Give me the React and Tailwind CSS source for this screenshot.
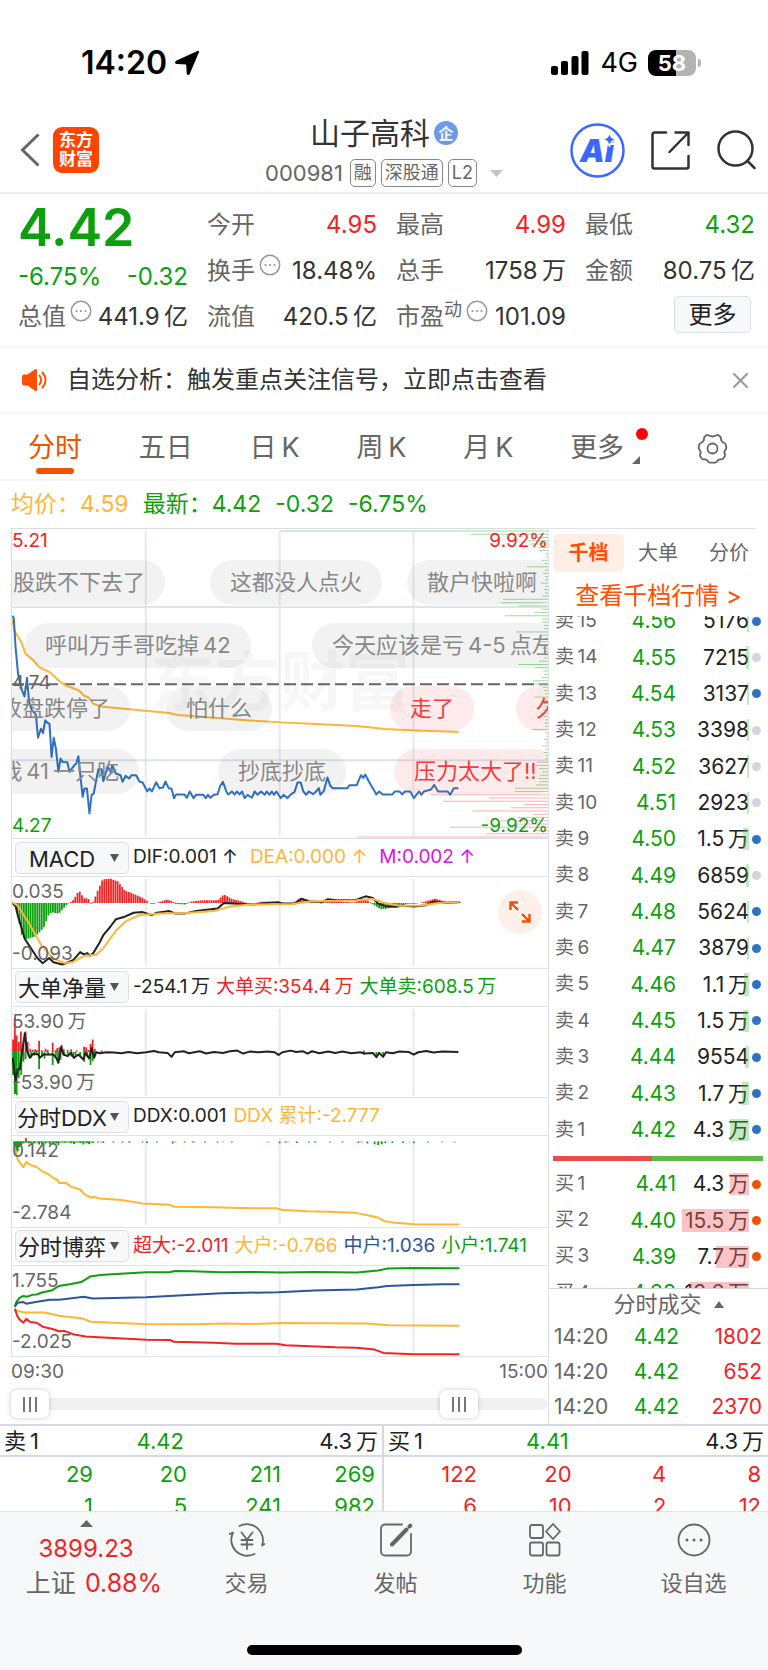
const PRICE_LINE =
  "35,-15 39,-8 44,80 51,160 57,190 62,210 69,228 76,172 82,245 90,270 101,282 104,320 107,352 115,325 121,338 127,300 134,308 139,310 145,410 151,352 157,385 164,455 170,415 176,425 189,426 195,455 208,436 214,430 220,408 226,470 232,530 237,505 244,505 251,580 257,525 263,520 270,480 276,447 285,447 290,483 296,460 303,440 310,455 315,435 325,460 338,465 344,485 352,467 362,475 369,465 382,465 391,484 400,487 413,514 419,505 426,514 438,486 447,504 457,502 464,484 473,504 481,506 488,534 494,523 517,523 524,533 532,514 543,534 550,524 570,524 577,534 583,524 590,533 600,524 610,522 618,496 625,485 635,515 640,523 650,514 658,523 664,514 672,523 679,514 686,534 694,524 706,533 714,514 722,524 732,514 742,524 748,514 756,524 762,514 768,524 775,514 787,534 795,524 806,534 814,524 826,515 834,487 843,487 850,513 858,524 866,514 878,522 886,514 894,504 898,524 908,512 918,472 926,497 933,504 974,504 980,495 1000,495 1012,465 1018,473 1024,463 1034,484 1050,513 1055,523 1063,514 1073,523 1100,523 1107,514 1120,514 1127,523 1135,514 1150,514 1160,534 1168,523 1175,514 1181,524 1188,514 1208,508 1217,494 1228,514 1255,514 1262,524 1272,504 1285,504";
const AVG_LINE =
  "35,-5 41,30 60,65 72,100 95,120 110,140 140,155 170,185 185,195 222,210 235,225 250,232 262,250 285,258 340,264 400,270 470,277 500,284 600,292 700,300 790,306 900,312 1000,317 1080,326 1150,330 1285,335";
const DIF_LINE =
  "35,190 44,200 52,235 70,300 85,325 105,358 120,374 138,358 150,371 175,378 205,365 225,340 235,347 245,343 252,351 262,343 280,310 290,288 310,262 325,240 350,232 375,220 400,218 425,227 440,220 475,215 490,222 520,222 550,215 610,207 628,190 680,193 710,195 745,190 780,188 790,192 825,192 845,177 870,186 905,187 918,179 945,182 1000,180 1025,170 1045,175 1060,192 1080,200 1110,202 1130,198 1160,201 1190,198 1215,186 1250,190 1285,188";
const DEA_LINE =
  "35,188 50,198 80,250 120,325 150,360 180,373 205,370 235,352 270,348 290,328 325,275 350,248 390,227 450,222 520,221 600,215 640,202 700,195 820,193 870,186 1000,182 1045,178 1080,190 1120,199 1180,198 1230,190 1285,188";
const NET_LINE =
  "36,655 44,725 50,690 56,690 62,640 70,580 76,632 84,655 92,643 106,643 112,655 122,645 150,645 158,655 164,670 172,622 178,645 190,650 198,640 208,655 220,645 234,660 240,640 250,657 257,625 264,655 270,638 280,641 300,638 320,639 340,641 360,637 385,641 410,638 432,634 445,638 470,640 481,652 490,638 515,635 530,641 560,635 578,642 600,637 625,640 645,635 665,633 682,642 700,636 725,638 750,636 770,638 781,646 792,638 815,633 830,637 850,635 862,642 875,635 895,641 920,636 940,640 960,636 985,641 1010,638 1022,642 1045,640 1055,653 1063,640 1074,652 1082,638 1100,641 1120,636 1145,637 1160,645 1172,638 1195,634 1215,639 1240,636 1285,637";
const DDX_LINE =
  "40,165 45,185 50,210 66,232 74,217 85,226 103,232 120,246 135,253 150,265 158,268 166,280 185,280 200,292 225,300 237,315 257,325 262,322 280,327 340,332 400,342 475,346 488,352 600,354 670,356 775,357 790,361 860,366 920,367 995,370 1030,378 1060,385 1078,396 1110,401 1160,405 1288,406";
const GAME_LINES = [
  ["#0d9f0d", "42,650 46,635 55,622 66,616 75,619 90,613 103,612 120,605 145,600 165,586 200,580 228,574 255,556 290,552 410,544 475,544 490,540 540,541 620,544 700,543 790,545 880,543 1000,545 1060,539 1085,533 1160,531 1288,532"],
  ["#2e5597", "42,648 50,637 66,635 74,640 100,635 140,628 165,628 190,625 235,619 260,624 410,620 500,615 620,608 780,605 880,600 1000,597 1060,590 1085,586 1160,583 1240,581 1288,581"],
  ["#ffb637", "42,660 70,667 125,667 165,677 228,684 255,695 400,702 550,703 630,700 700,702 790,699 1030,700 1090,706 1288,707"],
  ["#f02424", "42,655 48,675 54,687 66,698 74,686 85,696 103,698 120,710 150,718 165,724 180,723 205,733 240,740 290,743 410,750 478,751 488,756 600,759 660,762 775,762 800,767 940,773 1000,774 1050,780 1075,790 1160,794 1288,794"],
];

// [x, height] turning points of the MACD histogram
const MACD_SHAPE = [
  [40, 0], [50, -35], [60, -95], [70, -112], [100, -102], [115, -85], [125, -72], [135, -40], [145, -28], [165, -33],
  [180, -15], [190, -3], [197, 1], [205, 8], [222, 38], [235, 14], [248, 14], [254, -4], [262, 4], [275, 40],
  [288, 72], [310, 74], [330, 66], [350, 38], [380, 25], [400, 15], [412, 6], [418, 0], [428, -4], [440, 0],
  [466, 10], [485, 5], [492, -3], [520, -5], [535, 4], [570, 8], [610, 8], [628, 26], [650, 12], [680, 4],
  [700, -3], [740, 4], [780, 2], [820, -2], [845, 16], [870, 5], [900, -2], [920, 8], [990, 1], [1025, 12],
  [1042, -3], [1070, -20], [1110, -12], [1140, -3], [1170, -2], [1190, 4], [1220, 13], [1250, 4], [1292, 4],
];
const NET_BUY = [
  [37, 38], [42, 105], [47, 50], [53, 30], [59, 62], [65, 20], [72, 62], [78, 30], [85, 10], [92, 7], [99, 8], [104, 5],
  [110, 34], [118, 5], [128, 10], [134, 6], [148, 28], [156, 5], [161, 12], [167, 14], [173, 22], [179, 8], [190, 5],
  [200, 8], [215, 4], [236, 16], [242, 14], [248, 6], [254, 24], [260, 38], [266, 10], [285, 4], [1020, 4],
];
const NET_SELL = [
  [37, 70], [42, 128], [47, 132], [53, 80], [60, 70], [66, 30], [72, 22], [80, 14], [88, 18], [96, 12], [102, 10], [110, 52],
  [118, 10], [125, 20], [135, 10], [148, 40], [157, 14], [163, 30], [170, 24], [180, 10], [190, 8], [200, 14], [206, 12],
  [212, 12], [225, 12], [236, 30], [245, 14], [254, 40], [260, 28], [266, 12], [1020, 9], [1055, 14], [1074, 12],
];
const DDX_BARS = [
  [40, 18], [45, 32], [50, 30], [55, 16], [60, 10], [66, 6], [80, 5], [86, 4], [96, 6], [110, 9], [118, 7], [128, 6], [140, 8],
  [150, 7], [158, 6], [164, 11], [182, 3], [200, 5], [208, 7], [226, 4], [234, 9], [244, 5], [250, 8], [262, 4], [275, 3],
  [290, 4], [318, 3], [344, 3], [362, 3], [400, 3], [412, 4], [440, 3], [484, 6], [518, 3], [540, 3], [575, 3], [610, 3],
  [650, 3], [784, 5], [800, 3], [832, 4], [866, 3], [882, 3], [925, 3], [960, 3], [1005, 4], [1030, 6], [1050, 8],
  [1060, 10], [1070, 8], [1080, 5], [1100, 4], [1130, 4], [1160, 5], [1200, 3], [1240, 2],
];

// resting volume per price level, top to bottom, in px
const DEPTH = [
  268, 77, 12, 20, 18, 10, 9, 3, 2, 7, 3, 21, 3, 5, 3, 3, 7, 3, 4, 3, 6, 45, 47, 30, 7, 14, 43, 6, 6, 4, 4, 32,
  6, 3, 8, 12, 6, 4, 3, 4, 9, 30, 13, 5, 4, 6, 15, 13, 5, 4, 3, 14, 6, 4, 3, 5, 8, 4, 3, 4, 3, 16, 3, 2,
  4, 2, 6, 3, 4, 2, 3, 11, 12, 9, 6, 8, 10, 9, 12, 33, 33, 118, 59, 105, 24, 37, 76, 14, 30, 48, 30, 98, 16, 62, 191,
];

const BULLETS = [
  ["股跌不下去了", "right-[383px] top-[31px] bg-black/5 text-[#888]"],
  ["这都没人点火", "left-[198px] top-[31px] bg-black/5 text-[#888]"],
  ["散户快啦啊", "left-[395px] top-[31px] bg-black/5 text-[#888]"],
  ["呼叫万手哥吃掉\u200942", "left-[13px] top-[94px] bg-black/5 text-[#888]"],
  ["今天应该是亏\u20094-5\u2009点左右", "left-[300px] top-[94px] bg-black/5 text-[#888]"],
  ["收盘跌停了", "right-[418px] top-[157px] bg-black/5 text-[#888]"],
  ["怕什么", "left-[154px] top-[157px] bg-black/5 text-[#888]"],
  ["走了", "left-[378px] top-[157px] bg-[#f03c3c]/10 text-[#f03c3c]"],
  ["久了", "left-[504px] top-[157px] bg-[#f03c3c]/10 text-[#f03c3c]"],
  ["我\u200941\u2009一只吃", "right-[409px] top-[220px] bg-black/5 text-[#888]"],
  ["抄底抄底", "left-[206px] top-[220px] bg-black/5 text-[#888]"],
  ["压力太大了!!", "left-[382px] top-[220px] bg-[#f03c3c]/10 text-[#f03c3c]"],
];

const BLUE = "bg-[#2f72c4]";
const GREY = "bg-[#d3d6dc]";
const ORANGE = "bg-[#ea5404]";

const SELLS = [
  [15, "4.56", "5176", 5176, BLUE],
  [14, "4.55", "7215", 7215, GREY],
  [13, "4.54", "3137", 3137, BLUE],
  [12, "4.53", "3398", 3398, GREY],
  [11, "4.52", "3627", 3627, GREY],
  [10, "4.51", "2923", 2923, GREY],
  [9, "4.50", "1.5\u2009万", 15000, BLUE],
  [8, "4.49", "6859", 6859, GREY],
  [7, "4.48", "5624", 5624, BLUE],
  [6, "4.47", "3879", 3879, BLUE],
  [5, "4.46", "1.1\u2009万", 11000, BLUE],
  [4, "4.45", "1.5\u2009万", 15000, BLUE],
  [3, "4.44", "9554", 9554, BLUE],
  [2, "4.43", "1.7\u2009万", 17000, BLUE],
  [1, "4.42", "4.3\u2009万", 43000, BLUE],
];
const BUYS = [
  [1, "4.41", "4.3\u2009万", 43000, ORANGE],
  [2, "4.40", "15.5\u2009万", 155000, ORANGE],
  [3, "4.39", "7.7\u2009万", 77000, ORANGE],
  [4, "4.38", "13.6\u2009万", 136000, ORANGE],
];

function barsFromShape(shape) {
  const bars = [];
  for (let i = 1; i < 201; i++) {
    const x = 36 + i * 6.26;
    const k = shape.findIndex((p) => p[0] >= x);
    if (k < 1) continue;
    const [x0, y0] = shape[k - 1];
    const [x1, y1] = shape[k];
    bars.push([x, y0 + ((y1 - y0) * (x - x0)) / (x1 - x0)]);
  }
  return bars;
}

function barPath(bars, base, sign) {
  return bars.map(([x, h]) => `M${x} ${base}V${base - sign * h}`).join("");
}

function Line({ points, color }) {
  return <polyline points={points} fill="none" stroke={color} strokeWidth="2" strokeLinejoin="round" vectorEffect="non-scaling-stroke" />;
}

function Bars({ d, color }) {
  return <path d={d} stroke={color} strokeWidth="5" fill="none" />;
}

function Plot({ top, height, children }) {
  return (
    <svg className="absolute inset-0 h-full w-full" viewBox={`34 ${top} 1502 ${height}`} preserveAspectRatio="none" aria-hidden="true">
      <path d={`M409 ${top + 6}V${top + height - 6}M784 ${top + 6}V${top + height - 6}M1159 ${top + 6}V${top + height - 6}`} stroke="#e6e9f0" strokeWidth="2" vectorEffect="non-scaling-stroke" />
      {children}
    </svg>
  );
}

function Triangle({ className }) {
  return (
    <svg className={className} viewBox="0 0 10 8" fill="currentColor" preserveAspectRatio="none" aria-hidden="true">
      <path d="M0 0h10L5 8z" />
    </svg>
  );
}

function Dots({ className }) {
  return (
    <svg className={className} viewBox="0 0 22 22" fill="none" stroke="currentColor" aria-hidden="true">
      <circle cx="11" cy="11" r="9.7" strokeWidth="1.5" />
      <path d="M6.5 11h.01M11 11h.01M15.5 11h.01" strokeWidth="2.2" strokeLinecap="round" />
    </svg>
  );
}

function StatusBar() {
  return (
    <div className="flex h-[108px] items-center justify-between pt-[18px] pr-[67px] pl-[81px] text-black">
      <div className="flex items-center gap-[7px]">
        <span className="text-[32px] font-semibold">14:20</span>
        <svg className="h-[26px] w-[26px]" viewBox="0 0 26 26" aria-hidden="true">
          <path d="M24.3 1.6 15 23.6c-.4.9-1.4.8-1.5-.2l-.6-9.8-10.3-.5c-1-.1-1.1-1-.2-1.5z" fill="#000" stroke="#000" strokeWidth="1.6" strokeLinejoin="round" />
        </svg>
      </div>
      <div className="flex items-center">
        <svg className="h-[26px] w-[38px]" viewBox="0 0 38 26" aria-hidden="true">
          <rect x="0" y="16" width="7" height="9" rx="2" />
          <rect x="10" y="11" width="7" height="14" rx="2" />
          <rect x="20.5" y="6" width="7" height="19" rx="2" />
          <rect x="30.5" y="1" width="7" height="24" rx="2" />
        </svg>
        <span className="ml-[11px] text-[27px]">4G</span>
        <div className="ml-[10px] h-[26px] w-12 rounded-lg bg-linear-to-r from-black from-58% to-[#b3b3b3] to-58% text-center text-[22px] leading-[26px] font-bold text-white">
          58
        </div>
        <div className="ml-[2px] h-2 w-[3px] rounded-r-full bg-[#b3b3b3]" />
      </div>
    </div>
  );
}

function Header() {
  return (
    <header className="relative flex h-[86px] items-center justify-between border-b-2 border-[#ececec] pr-3 pl-5">
      <div className="flex items-center gap-[13px]">
        <button type="button" aria-label="返回">
          <svg className="h-[34px] w-5 text-[#666]" viewBox="0 0 20 34" fill="none" stroke="currentColor" strokeWidth="3" aria-hidden="true">
            <path d="M18.5 1.5 2.5 17l16 15.5" />
          </svg>
        </button>
        <a href="#home" className="flex h-[46px] w-[46px] flex-col items-center justify-center rounded-[9px] bg-[#ff4400] text-[17px] leading-[19px] font-bold text-white">
          <span>东方</span>
          <span>财富</span>
        </a>
      </div>
      <div className="absolute inset-x-32 top-2 flex flex-col items-center">
        <h1 className="flex items-center gap-1 text-[30px] leading-[34px] text-[#333]">
          山子高科
          <span className="flex h-6 w-6 items-center justify-center rounded-full bg-[#6c9ae8] text-[15px] leading-none font-bold text-white">企</span>
        </h1>
        <div className="mt-[9px] flex items-center gap-[5px] text-lg leading-[26px] text-[#666]">
          <span className="pr-[2px] text-[22px]">000981</span>
          <span className="rounded-[5px] border border-[#888] px-[3px]">融</span>
          <span className="rounded-[5px] border border-[#888] px-[3px]">深股通</span>
          <span className="rounded-[5px] border border-[#888] px-[3px]">L2</span>
          <Triangle className="ml-2 h-[7px] w-[13px] text-[#c4c4c4]" />
        </div>
      </div>
      <div className="flex items-center gap-[26px]">
        <button type="button" aria-label="Ai">
          <svg className="h-[55px] w-[55px] text-[#3a68ff]" viewBox="0 0 55 55" fill="currentColor" aria-hidden="true">
            <circle cx="27.5" cy="27.5" r="26" fill="none" stroke="currentColor" strokeWidth="2.5" />
            <text x="10" y="39" fontFamily="Inter" fontSize="31" fontWeight="900" fontStyle="italic">Ai</text>
            <path d="M39.5 10l2.2 4.300 4.300 2.200-4.300 2.200-2.200 4.300-2.200-4.300-4.300-2.200 4.300-2.200z" stroke="#fff" strokeWidth="1.5" />
          </svg>
        </button>
        <button type="button" aria-label="分享">
          <svg className="h-[39px] w-[39px] text-[#333]" viewBox="0 0 39 39" fill="none" stroke="currentColor" strokeWidth="2.5" strokeLinecap="round" strokeLinejoin="round" aria-hidden="true">
            <path d="M15 1.5H3.5a2 2 0 0 0-2 2v32a2 2 0 0 0 2 2h32a2 2 0 0 0 2-2V25M24.5 1.5h13V14M37 2 18.5 21" />
          </svg>
        </button>
        <button type="button" aria-label="搜索">
          <svg className="h-10 w-10 text-[#333]" viewBox="0 0 40 40" fill="none" stroke="currentColor" strokeWidth="2.5" strokeLinecap="round" aria-hidden="true">
            <circle cx="19.5" cy="18.5" r="17" />
            <path d="M31.5 31 38.5 38" />
          </svg>
        </button>
      </div>
    </header>
  );
}

function Quote({ label, info, sup, value, color }) {
  return (
    <div className="flex h-[46px] items-center justify-between whitespace-nowrap">
      <dt className="flex items-center text-[#666]">
        {label}
        {sup && <span className="self-start text-lg leading-5">{sup}</span>}
        {info && <Dots className="mb-3 ml-1 h-[22px] w-[22px] text-[#999]" />}
      </dt>
      <dd className={color || "text-[#333]"}>{value}</dd>
    </div>
  );
}

function Quotes() {
  return (
    <section className="grid grid-cols-4 gap-x-[19px] border-b-2 border-[#f5f5f5] pt-2 pr-[13px] pb-[6px] pl-[18px] text-2xl">
      <dl>
        <div className="flex h-[52px] items-center text-[52px] font-semibold text-[#0d9f0d]">4.42</div>
        <div className="flex h-10 items-center justify-between pt-[6px] text-[#0d9f0d]">
          <span>-6.75%</span>
          <span>-0.32</span>
        </div>
        <Quote label="总值" info value={"441.9\u2009亿"} />
      </dl>
      <dl>
        <Quote label="今开" value="4.95" color="text-[#f02424]" />
        <Quote label="换手" info value="18.48%" />
        <Quote label="流值" value={"420.5\u2009亿"} />
      </dl>
      <dl>
        <Quote label="最高" value="4.99" color="text-[#f02424]" />
        <Quote label="总手" value={"1758\u2009万"} />
        <Quote label="市盈" sup="动" info value="101.09" />
      </dl>
      <div>
        <dl>
          <Quote label="最低" value="4.32" color="text-[#0d9f0d]" />
          <Quote label="金额" value={"80.75\u2009亿"} />
        </dl>
        <button type="button" className="mt-[2px] mr-1 ml-auto block h-[37px] w-[77px] rounded-[5px] border border-[#dcdfe6] bg-[#f7f8fa] leading-none text-[#222]">
          更多
        </button>
      </div>
    </section>
  );
}

function Notice() {
  return (
    <div className="flex h-[66px] items-center border-b-2 border-[#f5f5f5] pr-5 pl-[22px]">
      <svg className="h-6 w-[25px] text-[#ff5000]" viewBox="0 0 25 24" fill="currentColor" aria-hidden="true">
        <path d="M0 8.5a2 2 0 0 1 2-2h3.500L13 1.200c1-.7 2-.2 2 1v19.600c0 1.200-1 1.700-2 1L5.500 17.500H2a2 2 0 0 1-2-2z" />
        <path d="M17.5 7.500c2 2.500 2 6.500 0 9M20.500 4.500c4 4.500 4 10.500 0 15" fill="none" stroke="currentColor" strokeWidth="2" strokeLinecap="round" />
      </svg>
      <a href="#signal" className="ml-5 flex-1 text-2xl text-[#333]">自选分析：触发重点关注信号，立即点击查看</a>
      <button type="button" aria-label="关闭">
        <svg className="h-[15px] w-[15px] text-[#999]" viewBox="0 0 15 15" stroke="currentColor" strokeWidth="2" strokeLinecap="round" aria-hidden="true">
          <path d="M1 1l13 13M14 1 1 14" />
        </svg>
      </button>
    </div>
  );
}

function Tabs() {
  return (
    <nav className="flex h-[67px] items-center justify-between border-b-2 border-[#f5f5f5] pt-[3px] pr-10 pl-7 text-[27px] text-[#666]">
      <button type="button" className="relative text-[#ea5404]">
        分时
        <span className="absolute inset-x-2 -bottom-[6px] h-[6px] rounded-full bg-[#ea5404]" />
      </button>
      <button type="button">五日</button>
      <button type="button">{"日\u2009K"}</button>
      <button type="button">{"周\u2009K"}</button>
      <button type="button">{"月\u2009K"}</button>
      <button type="button" className="relative pr-4">
        更多
        <span className="absolute -right-2 top-0 h-3 w-3 rounded-full bg-[#f00]" />
        <svg className="absolute right-0 bottom-1 h-2 w-2" viewBox="0 0 8 8" fill="currentColor" aria-hidden="true">
          <path d="M8 0v8H0z" />
        </svg>
      </button>
      <button type="button" aria-label="设置">
        <svg className="h-[31px] w-[31px]" viewBox="0 0 31 31" fill="none" stroke="currentColor" strokeWidth="1.8" strokeLinejoin="round" aria-hidden="true">
          <path d="M11.500 2.200q4 2.600 8 0 1-.7 2 0l2 1.800q.700.700.500 1.700-.300 2.800 3.200 4.300 1.200.4 1.500 1.500l.600 3q.200 1-.6 1.800-2.200 2.200-.8 5 .400 1-.1 1.900l-1.800 2.500q-.700.900-1.700.700-3.300-.6-4.500 2.300-.5 1-1.500 1h-5.600q-1 0-1.500-1-1.200-2.900-4.500-2.300-1 .2-1.700-.7L3.200 23.200q-.5-.9-.1-1.900 1.400-2.800-.8-5-.8-.8-.6-1.800l.6-3q.3-1.100 1.500-1.500Q7.300 8.500 7 5.700 6.800 4.700 7.500 4l2-1.800q1-.7 2 0z" />
          <circle cx="15.500" cy="15.500" r="5" />
        </svg>
      </button>
    </nav>
  );
}

function PriceChart() {
  return (
    <div className="relative h-[311px] overflow-hidden border-t border-b border-l border-[#d9dce6] text-[19px]">
      <div className="absolute inset-x-0 top-[118px] text-center text-[65px] leading-[70px] font-bold text-black/3">东方财富</div>
      <Plot top={-276} height={930}>
        <path d="M34 -41H1536M34 420H1536" stroke="#e0e3ec" strokeWidth="2" vectorEffect="non-scaling-stroke" />
        <path d="M34 191H1536" stroke="#666" strokeWidth="2" strokeDasharray="12 5" vectorEffect="non-scaling-stroke" />
        {DEPTH.map((w, i) => (
          <path key={i} d={`M1536 ${-270 + i * 9.8}h${-w * 2.8}`} stroke={i < 80 ? "#9fdb9f" : "#f9b4b4"} strokeWidth="3" />
        ))}
        <Line points={AVG_LINE} color="#ffb637" />
        <Line points={PRICE_LINE} color="#2f72c4" />
      </Plot>
      {BULLETS.map(([text, cls]) => (
        <span key={text} className={`absolute rounded-full px-5 text-[22px] leading-[45px] whitespace-nowrap ${cls}`}>
          {text}
        </span>
      ))}
      <span className="absolute top-0 left-0 leading-6 text-[#f02424]">5.21</span>
      <span className="absolute top-0 right-0 leading-6 text-[#f02424]">9.92%</span>
      <span className="absolute top-[142px] left-0 leading-6 text-[#666]">4.74</span>
      <span className="absolute bottom-0 left-0 leading-6 text-[#0d9f0d]">4.27</span>
      <span className="absolute right-0 bottom-0 leading-6 text-[#0d9f0d]">-9.92%</span>
    </div>
  );
}

function Indicator({ name, values, max, min, top, height, extra, children }) {
  return (
    <section className="flex flex-1 flex-col border-b border-l border-[#dfe2e8]">
      <div className="flex h-[38px] items-center border-b border-[#dfe2e8] pl-[3px]">
        <div className="relative">
          <select aria-label={name} className="h-8 w-[114px] appearance-none rounded-[5px] border border-[#dcdfe6] bg-[#f7f8fa] pr-5 text-center text-[22px] text-[#222]">
            <option>{name}</option>
          </select>
          <Triangle className="pointer-events-none absolute top-3 right-[10px] h-2 w-[9px] text-[#555]" />
        </div>
        <div className="flex pl-1 text-[19px] whitespace-nowrap">{values}</div>
      </div>
      <div className="relative flex-1 text-[19px] leading-6 text-[#666]">
        <Plot top={top} height={height}>{children}</Plot>
        <span className="absolute top-[3px] left-0">{max}</span>
        <span className="absolute bottom-[2px] left-0">{min}</span>
        {extra}
      </div>
    </section>
  );
}

function Charts() {
  const macd = barsFromShape(MACD_SHAPE);
  return (
    <div className="flex min-w-0 flex-1 flex-col pl-[11px]">
      <PriceChart />
      <Indicator
        name="MACD"
        max="0.035"
        min="-0.093"
        top={111}
        height={276}
        values={
          <>
            <span className="mr-3 text-[#222]">DIF:0.001 ↑</span>
            <span className="mr-3 text-[#ffb637]">DEA:0.000 ↑</span>
            <span className="text-[#dd12e6]">M:0.002 ↑</span>
          </>
        }
        extra={
          <button type="button" aria-label="全屏" className="absolute top-[13px] right-[6px] flex h-11 w-11 items-center justify-center rounded-full bg-[#fdf0ea]">
            <svg className="h-[22px] w-[22px] text-[#ea5404]" viewBox="0 0 22 22" fill="none" stroke="currentColor" strokeWidth="2.4" aria-hidden="true">
              <path d="M1.500 9V1.500H9M1.500 1.500 9 9M20.500 13v7.500H13M20.500 20.500 13 13" />
            </svg>
          </button>
        }
      >
        <Bars d={barPath(macd.filter((b) => b[1] > 0), 190, 1)} color="#f02424" />
        <Bars d={barPath(macd.filter((b) => b[1] < 0), 190, 1)} color="#0d9f0d" />
        <Line points={DIF_LINE} color="#222" />
        <Line points={DEA_LINE} color="#ffb637" />
      </Indicator>
      <Indicator
        name="大单净量"
        max={"53.90\u2009万"}
        min={"-53.90\u2009万"}
        top={500}
        height={276}
        values={
          <>
            <span className="mr-[6px] text-[#222]">{"-254.1\u2009万"}</span>
            <span className="mr-[6px] text-[#f02424]">{"大单买:354.4\u2009万"}</span>
            <span className="text-[#0d9f0d]">{"大单卖:608.5\u2009万"}</span>
          </>
        }
      >
        <Bars d={barPath(NET_BUY, 637, 1)} color="#f02424" />
        <Bars d={barPath(NET_SELL, 637, -1)} color="#0d9f0d" />
        <Line points={NET_LINE} color="#222" />
      </Indicator>
      <Indicator
        name="分时DDX"
        max="0.142"
        min="-2.784"
        top={138}
        height={274}
        values={
          <>
            <span className="mr-[7px] text-[#222]">DDX:0.001</span>
            <span className="text-[#ffb637]">DDX 累计:-2.777</span>
          </>
        }
      >
        <path d="M280 156H1288" stroke="#f58a8a" strokeWidth="3" strokeDasharray="8 74 5 120 8 46" />
        <path d="M40 156H260" stroke="#0d9f0d" strokeWidth="3" />
        <Bars d={barPath(DDX_BARS, 155, -1)} color="#0d9f0d" />
        <Bars d="M73 157V144" color="#f02424" />
        <Line points={DDX_LINE} color="#ffb637" />
      </Indicator>
      <Indicator
        name="分时博弈"
        max="1.755"
        min="-2.025"
        top={525}
        height={276}
        values={
          <>
            <span className="mr-[6px] text-[#f02424]">超大:-2.011</span>
            <span className="mr-[6px] text-[#ffb637]">大户:-0.766</span>
            <span className="mr-[6px] text-[#2e5597]">中户:1.036</span>
            <span className="text-[#0d9f0d]">小户:1.741</span>
          </>
        }
      >
        {GAME_LINES.map(([color, points]) => (
          <Line key={color} points={points} color={color} />
        ))}
      </Indicator>
      <div className="flex h-[31px] items-center justify-between text-[19px] text-[#666]">
        <span>09:30</span>
        <span>15:00</span>
      </div>
      <div className="relative flex h-9 items-center pb-1">
        <div className="h-3 flex-1 rounded-full bg-[#f1f1f4]" />
        <RangeThumb label="开始时间" value={0} />
        <RangeThumb label="结束时间" value={86} />
      </div>
    </div>
  );
}

function RangeThumb({ label, value }) {
  return (
    <input
      type="range"
      aria-label={label}
      defaultValue={value}
      className="pointer-events-none absolute inset-x-0 top-[2px] h-7 w-full appearance-none bg-transparent [&::-webkit-slider-thumb]:pointer-events-auto [&::-webkit-slider-thumb]:h-7 [&::-webkit-slider-thumb]:w-[38px] [&::-webkit-slider-thumb]:appearance-none [&::-webkit-slider-thumb]:rounded-md [&::-webkit-slider-thumb]:bg-white [&::-webkit-slider-thumb]:bg-[repeating-linear-gradient(90deg,#777_0_2px,transparent_2px_6px)] [&::-webkit-slider-thumb]:bg-[length:14px_15px] [&::-webkit-slider-thumb]:bg-center [&::-webkit-slider-thumb]:bg-no-repeat [&::-webkit-slider-thumb]:shadow-[0_0_5px_rgba(0,0,0,0.22)]"
    />
  );
}

function Levels({ side, rows, tint, className }) {
  return (
    <table className={`w-full shrink-0 table-fixed ${className}`}>
      <colgroup>
        <col className="w-[60px]" />
        <col className="w-[67px]" />
        <col className="w-[73px]" />
        <col />
      </colgroup>
      <tbody>
        {rows.map(([n, price, label, volume, dot]) => (
          <tr key={n}>
            <th scope="row" className="pl-[6px] text-left text-[19px] font-normal whitespace-nowrap text-[#666]">{`${side}\u2009${n}`}</th>
            <td className="text-right text-[#0d9f0d]">{price}</td>
            <td className="relative text-right whitespace-nowrap text-[#222]">
              {label}
              <span className={`absolute inset-y-[7px] right-0 ${tint}`} style={{ width: Math.max(2, (volume / 155000) * 67) }} />
            </td>
            <td className="pl-[3px]">
              <span className={`block h-[9px] w-[9px] rounded-full ${dot}`} />
            </td>
          </tr>
        ))}
      </tbody>
    </table>
  );
}

function OrderBook() {
  return (
    <aside className="flex w-[220px] flex-col border-l border-[#dfe2e8] text-[21px]">
      <div className="mr-3 flex h-11 items-end border-t border-[#dfe2e8] pr-[7px] pl-1 text-xl text-[#666]">
        <button type="button" className="h-[38px] w-[71px] rounded-md bg-[#ffeee6] font-bold text-[#ff5000]">千档</button>
        <button type="button" className="ml-[14px] h-[38px]">大单</button>
        <button type="button" className="ml-auto h-[38px]">分价</button>
      </div>
      <a href="#levels" className="flex h-11 items-center justify-center pt-1 text-2xl text-[#ff5000]">查看千档行情 &gt;</a>
      <div className="flex h-[532px] flex-col justify-end overflow-hidden">
        <Levels side="卖" rows={SELLS} tint="bg-[#4ec24e]/35" className="h-[545px]" />
      </div>
      <div className="mt-2 mr-[5px] mb-[5px] ml-1 h-[5px] bg-linear-to-r from-[#e84b4b] from-47% to-[#5dba47] to-47%" />
      <div className="h-[122px] overflow-hidden">
        <Levels side="买" rows={BUYS} tint="bg-[#f56c6c]/40" className="h-[145px]" />
      </div>
      <button type="button" className="flex h-[31px] items-center justify-center gap-3 border-t border-[#d3d7e0] pl-5 text-[22px] text-[#666]">
        分时成交
        <Triangle className="h-[7px] w-[10px] rotate-180" />
      </button>
      <table className="h-[105px] w-full table-fixed">
        <tbody>
          {["1802", "652", "2370"].map((v) => (
            <tr key={v}>
              <td className="pl-[5px] text-[#666]">14:20</td>
              <td className="pr-4 text-right text-[#0d9f0d]">4.42</td>
              <td className="pr-[6px] text-right text-[#f02424]">{v}</td>
            </tr>
          ))}
        </tbody>
      </table>
    </aside>
  );
}

function Queue({ side, price, total, rows, color }) {
  return (
    <table className="w-full table-fixed">
      <colgroup>
        <col className="w-[100px]" />
        <col />
        <col />
        <col />
      </colgroup>
      <thead className="border-b-2 border-[#d6d9e3]">
        <tr className="h-[30px] text-[#222]">
          <th scope="col" className="pl-1 text-left font-normal">{side}</th>
          <td className="pr-[10px] text-right text-[#0d9f0d]">{price}</td>
          <td colSpan="2" className="pr-1 text-right">{total}</td>
        </tr>
      </thead>
      <tbody className={color}>
        <tr className="h-[2px]" />
        {rows.map((row) => (
          <tr key={row[0]} className="h-8">
            {row.map((v, i) => (
              <td key={i} className="pr-[7px] text-right">{v}</td>
            ))}
          </tr>
        ))}
      </tbody>
    </table>
  );
}

function Queues() {
  return (
    <section className="grid h-[87px] grid-cols-2 overflow-hidden border-t-2 border-[#d6d9e3] text-[22px] leading-7">
      <div className="border-r-2 border-[#d6d9e3]">
        <Queue side={"卖\u20091"} price="4.42" total={"4.3\u2009万"} color="text-[#0d9f0d]" rows={[[29, 20, 211, 269], [1, 5, 241, 982]]} />
      </div>
      <Queue side={"买\u20091"} price="4.41" total={"4.3\u2009万"} color="text-[#f02424]" rows={[[122, 20, 4, 8], [6, 10, 2, 12]]} />
    </section>
  );
}

function NavItem({ label, children }) {
  return (
    <a href="#nav" className="flex flex-1 flex-col items-center pt-[10px]">
      <svg className="h-9 w-9" viewBox="0 0 36 36" fill="none" stroke="currentColor" strokeWidth="1.8" strokeLinecap="round" strokeLinejoin="round" aria-hidden="true">
        {children}
      </svg>
      <span className="mt-[9px] leading-8">{label}</span>
    </a>
  );
}

function BottomNav() {
  return (
    <footer className="border-t border-[#e2e4e8] bg-[#f7f8fa] text-[22px] text-[#666]">
      <nav className="flex h-[133px]">
        <a href="#index" className="flex w-[172px] flex-col items-center pt-2 text-2xl">
          <Triangle className="h-[7px] w-[13px] rotate-180" />
          <span className="mt-[6px] leading-8 text-[#f02424]">3899.23</span>
          <span className="mt-[2px] flex gap-[9px] pl-4 text-[25px] leading-8">
            <span>上证</span>
            <span className="text-[#f02424]">0.88%</span>
          </span>
        </a>
        <NavItem label="交易">
          <path d="M10.5 4A16 16 0 0 1 33 23.5l2.5-1.500M25.500 32A16 16 0 0 1 4 10.500L.500 12M12.500 10.500l5.500 7 5.500-7M18 17.500V27M12.500 18h11M12.500 22.500h11" />
        </NavItem>
        <NavItem label="发帖">
          <path d="M24 2.500H7a4 4 0 0 0-4 4v23a4 4 0 0 0 4 4h22a4 4 0 0 0 4-4V12" />
          <path d="M14 22.500 28.500 7.500M31.500 4.500l.800-.800" strokeWidth="4" />
        </NavItem>
        <NavItem label="功能">
          <rect x="3" y="3" width="13" height="13" rx="2" />
          <rect x="3" y="20.5" width="13" height="13" rx="2" />
          <rect x="19.5" y="20.5" width="13" height="13" rx="2" />
          <path d="M26 2l7 7.500-7 7.500-7-7.500z" />
        </NavItem>
        <NavItem label="设自选">
          <circle cx="18" cy="18" r="15.5" />
          <path d="M11 18h.01M18 18h.01M25 18h.01" strokeWidth="3" />
        </NavItem>
      </nav>
      <div className="flex h-[25px] justify-center">
        <div className="h-[10px] w-[275px] rounded-full bg-black" />
      </div>
    </footer>
  );
}

export default function App() {
  return (
    <div className="w-full overflow-hidden bg-white font-['Inter','Noto_Sans_CJK_SC',sans-serif]">
      <StatusBar />
      <Header />
      <Quotes />
      <Notice />
      <Tabs />
      <div className="flex h-[47px] items-center gap-[14px] pl-[11px] text-[23px] whitespace-nowrap text-[#0d9f0d]">
        <span className="text-[#ffb637]">均价：4.59</span>
        <span>最新：4.42</span>
        <span>-0.32</span>
        <span>-6.75%</span>
      </div>
      <main className="flex">
        <Charts />
        <OrderBook />
      </main>
      <Queues />
      <BottomNav />
    </div>
  );
}
